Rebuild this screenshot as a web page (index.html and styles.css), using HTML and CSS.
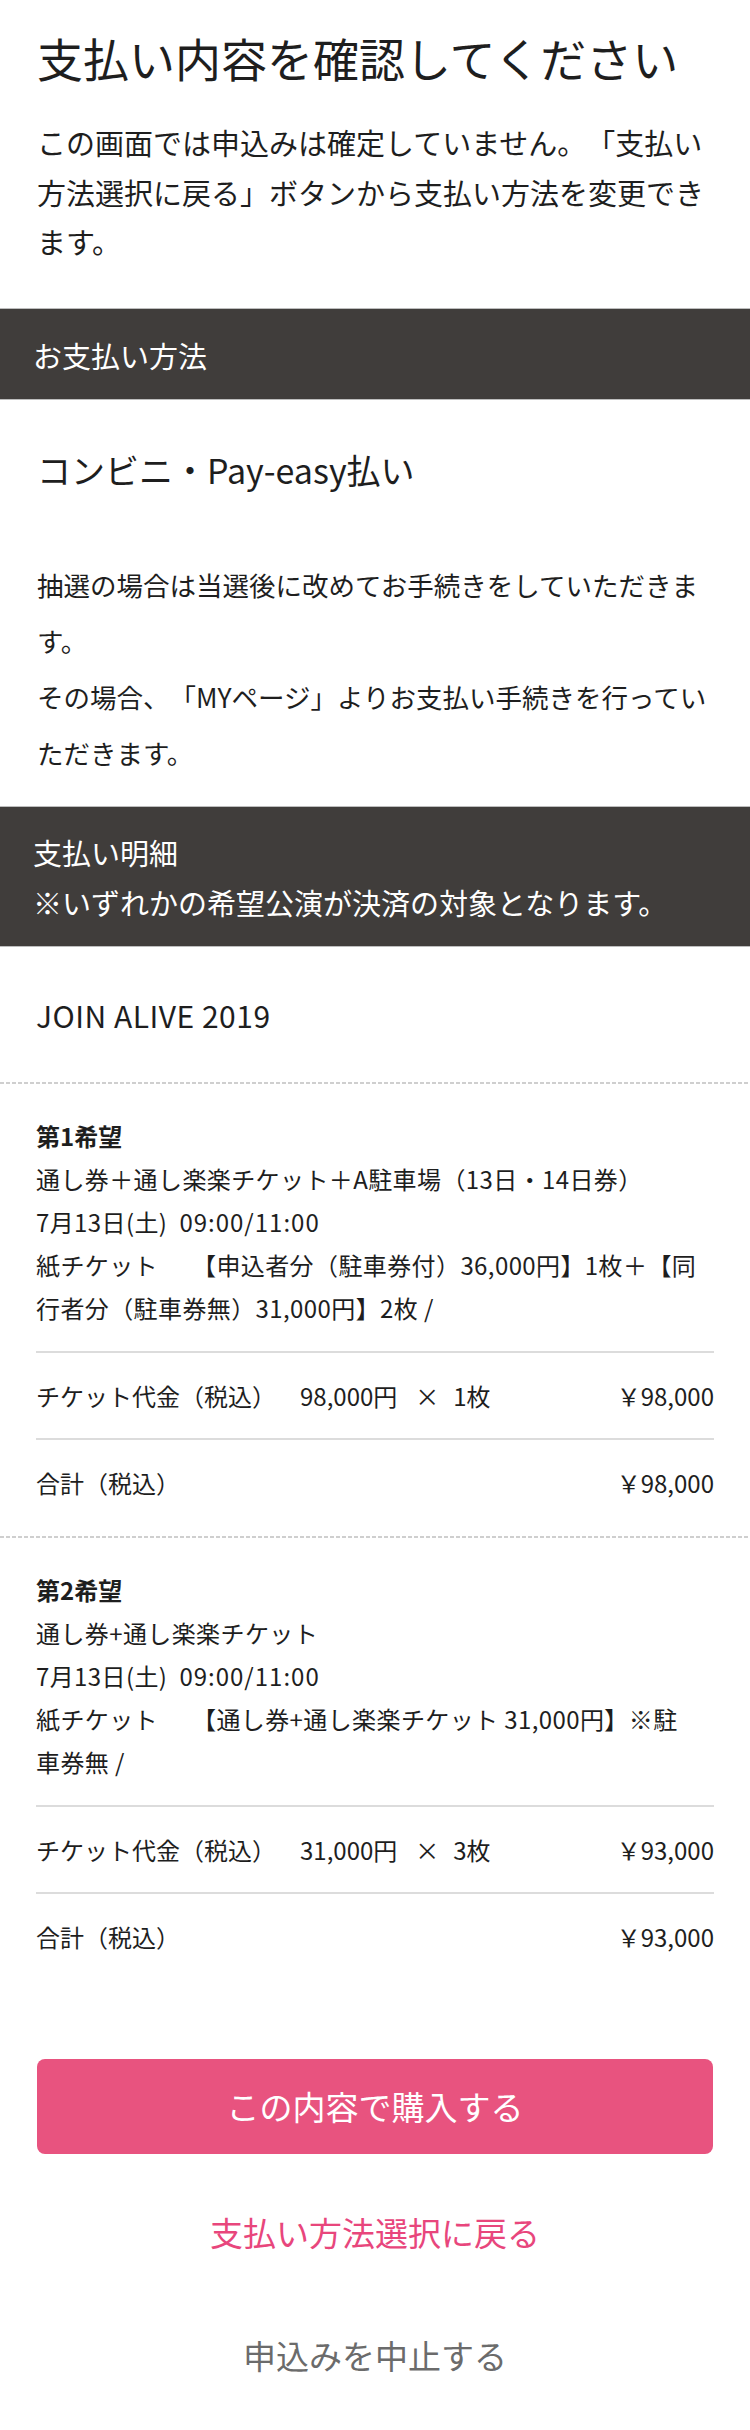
FILE: index.html
```html
<!DOCTYPE html>
<html lang="ja">
<head>
<meta charset="utf-8">
<title>支払い内容を確認してください</title>
<link rel="stylesheet" href="styles.css">
</head>
<body>
<div class="page">
  <header class="intro">
    <h1 class="intro__title">支払い内容を確認してください</h1>
    <p class="intro__text">この画面では申込みは確定していません。「支払い方法選択に戻る」ボタンから支払い方法を変更できます。</p>
  </header>

  <h2 class="band">お支払い方法</h2>

  <section class="method">
    <p class="method__name">コンビニ・Pay-easy払い</p>
    <div class="method__note">
      <p>抽選の場合は当選後に改めてお手続きをしていただきます。</p>
      <p>その場合、「MYページ」よりお支払い手続きを行っていただきます。</p>
    </div>
  </section>

  <div class="band band--tall">
    <p>支払い明細</p>
    <p>※いずれかの希望公演が決済の対象となります。</p>
  </div>

  <p class="event">JOIN ALIVE 2019</p>

  <section class="choice">
    <div class="choice__detail">
      <h3 class="choice__title">第1希望</h3>
      <p>通し券＋通し楽楽チケット＋A駐車場（13日・14日券）</p>
      <p>7月13日(土)<span class="choice__time">09:00/11:00</span></p>
      <p><span class="choice__kind">紙チケット</span>【申込者分（駐車券付）36,000円】1枚＋【同<br>行者分（駐車券無）31,000円】2枚 /</p>
    </div>
    <div class="row">
      <span>チケット代金（税込）<span class="row__calc">98,000円<span class="row__x">×</span>1枚</span></span>
      <span>￥98,000</span>
    </div>
    <div class="row">
      <span>合計（税込）</span>
      <span>￥98,000</span>
    </div>
  </section>

  <section class="choice choice--last">
    <div class="choice__detail">
      <h3 class="choice__title">第2希望</h3>
      <p>通し券+通し楽楽チケット</p>
      <p>7月13日(土)<span class="choice__time">09:00/11:00</span></p>
      <p><span class="choice__kind">紙チケット</span>【通し券+通し楽楽チケット 31,000円】※駐<br>車券無 /</p>
    </div>
    <div class="row">
      <span>チケット代金（税込）<span class="row__calc">31,000円<span class="row__x">×</span>3枚</span></span>
      <span>￥93,000</span>
    </div>
    <div class="row">
      <span>合計（税込）</span>
      <span>￥93,000</span>
    </div>
  </section>

  <div class="actions">
    <a class="actions__buy" href="#">この内容で購入する</a>
    <a class="actions__back" href="#">支払い方法選択に戻る</a>
    <a class="actions__cancel" href="#">申込みを中止する</a>
  </div>
</div>
</body>
</html>
```

FILE: styles.css
```css
* {
  box-sizing: border-box;
}

html, body {
  margin: 0;
  padding: 0;
  background: #fff;
}

body {
  font-family: "Noto Sans CJK JP", "Noto Sans", sans-serif;
  color: #1e1e1e;
  text-spacing-trim: space-all;
}

p, h1, h2, h3 {
  margin: 0;
  font-weight: 400;
}

.page {
  width: 750px;
  min-height: 2430px;
}

.intro {
  padding: 27px 37px 41px;
}

.intro__title {
  font-size: 46px;
  line-height: 60px;
}

.intro__text {
  margin-top: 31px;
  font-size: 29px;
  line-height: 49.5px;
}

.band {
  background: #403d3b;
  color: #fff;
  font-size: 29px;
  line-height: 92px;
  height: 92px;
  padding: 0 33px;
  border-top: 1px solid #bdbdbd;
  border-bottom: 1px solid #bdbdbd;
}

.band--tall {
  height: auto;
  line-height: 50px;
  padding: 20px 33px 19px;
}

.method {
  padding: 45px 37px 25px;
}

.method__name {
  font-size: 34px;
  line-height: 50px;
}

.method__note {
  margin-top: 62px;
  font-size: 26.5px;
  line-height: 56px;
}

.event {
  padding: 46px 36px 45px;
  font-size: 30px;
  line-height: 44px;
  letter-spacing: 0.5px;
}

.choice {
  padding: 32px 36px 11px;
  background: repeating-linear-gradient(to right, #cfcfcf 0 4px, transparent 4px 6px) top left / 100% 2px no-repeat;
}

.choice__detail {
  font-size: 24px;
  line-height: 43px;
  letter-spacing: 0.4px;
  margin-bottom: 22px;
}

.choice__title {
  font-size: 24px;
  line-height: 43px;
  font-weight: 700;
  letter-spacing: 0;
}

.choice__time {
  margin-left: 12px;
  letter-spacing: 1px;
}

.choice__kind {
  margin-right: 34px;
}

.row {
  display: flex;
  justify-content: space-between;
  align-items: center;
  border-top: 2px solid #dcdcdc;
  padding: 24px 0;
  font-size: 24px;
  line-height: 37px;
}

.row__calc {
  margin-left: 24px;
}

.row__x {
  margin: 0 14px 0 18px;
}

.actions {
  display: flex;
  flex-direction: column;
  align-items: stretch;
  padding: 69px 37px 33px;
}

.actions a {
  display: block;
  text-align: center;
  text-decoration: none;
  font-size: 33px;
}

.actions__buy {
  height: 95px;
  line-height: 95px;
  background: #e8537f;
  color: #fff;
  border-radius: 8px;
}

.actions__back {
  margin-top: 38px;
  line-height: 80px;
  color: #e8467c;
}

.actions__cancel {
  margin-top: 43px;
  line-height: 80px;
  color: #6b6b6b;
}
```
